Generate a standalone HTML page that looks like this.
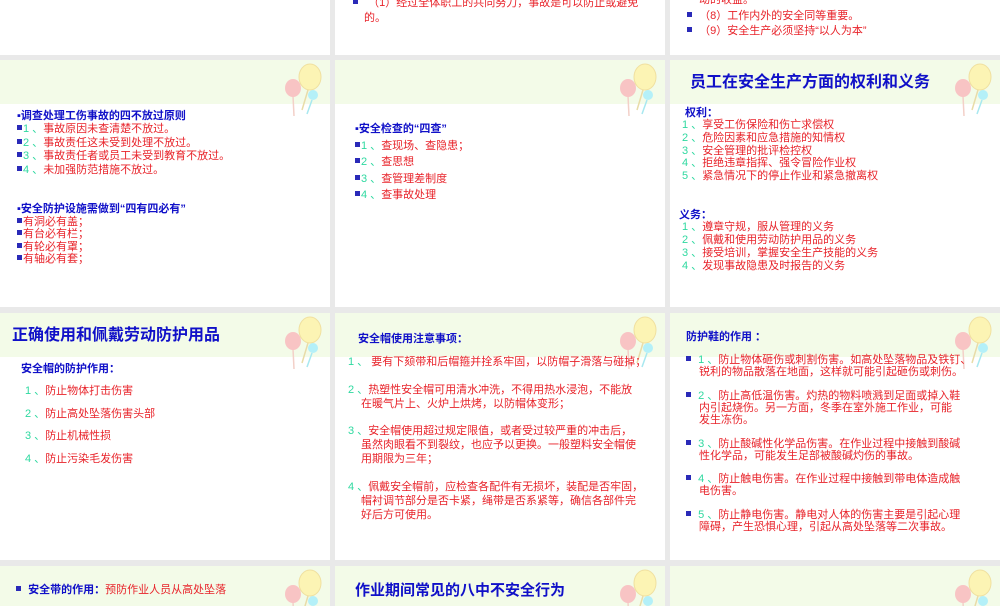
<!DOCTYPE html>
<html><head><meta charset="utf-8"><style>
*{margin:0;padding:0;box-sizing:border-box}
body{width:1000px;height:600px;background:#e9e9e9;position:relative;overflow:hidden;font-family:"Liberation Sans","Noto Sans CJK SC",sans-serif}
.s{position:absolute;background:#fff;overflow:hidden;width:330px}
.band{position:absolute;left:0;top:0;width:100%;height:44px;background:#f3fbe8}
.t{position:absolute;white-space:nowrap;font-size:11px;line-height:13px;color:#e8232a}
.b{color:#1010c8;font-weight:bold}
.g{color:#2fd9a0}
.sq{display:inline-block;width:5px;height:5px;background:#2a2ab8;vertical-align:2px;margin-right:1px}
.h{font-size:16px;font-weight:bold;color:#1010c8;line-height:20px}
.bal{position:absolute;left:280px;top:0}
</style></head><body>
<svg width="0" height="0" style="position:absolute"><defs><g id="bl">
<line x1="13" y1="36" x2="14" y2="56" stroke="#f3d0c8" stroke-width="1.5"/>
<line x1="28" y1="30" x2="22" y2="50" stroke="#e8dca8" stroke-width="1.5"/>
<line x1="32" y1="40" x2="27" y2="54" stroke="#a8e8f0" stroke-width="1.5"/>
<ellipse cx="13" cy="28" rx="8" ry="9" fill="#f8c4c4"/>
<ellipse cx="30" cy="17" rx="11" ry="13" fill="#fcf4b4" stroke="#f0e0a0"/>
<ellipse cx="33" cy="35" rx="5" ry="5" fill="#b4f0f8"/>
</g></defs></svg>

<div class="s" style="left:0;top:0;height:55px"></div>
<div class="s" style="left:335px;top:0;height:55px">
<div class="t" style="left:18px;top:-3px"><span class="sq"></span>&nbsp;&nbsp;&nbsp;（1）经过全体职工的共同努力，事故是可以防止或避免</div>
<div class="t" style="left:29px;top:12px">的。</div></div>
<div class="s" style="left:670px;top:0;height:55px">
<div class="t" style="left:29px;top:-6px">动的收益。</div>
<div class="t" style="left:17px;top:10px"><span class="sq"></span>&nbsp;&nbsp;（8）工作内外的安全同等重要。</div>
<div class="t" style="left:17px;top:25px"><span class="sq"></span>&nbsp;&nbsp;（9）安全生产必须坚持“以人为本”</div></div>

<div class="s" style="left:0;top:60px;height:247px"><div class="band"></div><svg class="bal" width="50" height="60"><use href="#bl"/></svg>
<div class="t" style="left:17px;top:50px"><span class="b">▪调查处理工伤事故的四不放过原则</span></div>
<div class="t" style="left:17px;top:63px"><span class="sq"></span><span class="g">1 、</span>事故原因未查清楚不放过。</div>
<div class="t" style="left:17px;top:77px"><span class="sq"></span><span class="g">2 、</span>事故责任这未受到处理不放过。</div>
<div class="t" style="left:17px;top:90px"><span class="sq"></span><span class="g">3 、</span>事故责任者或员工未受到教育不放过。</div>
<div class="t" style="left:17px;top:104px"><span class="sq"></span><span class="g">4 、</span>未加强防范措施不放过。</div>
<div class="t" style="left:17px;top:143px"><span class="b">▪安全防护设施需做到“四有四必有”</span></div>
<div class="t" style="left:17px;top:156px"><span class="sq"></span>有洞必有盖；</div>
<div class="t" style="left:17px;top:168px"><span class="sq"></span>有台必有栏；</div>
<div class="t" style="left:17px;top:181px"><span class="sq"></span>有轮必有罩；</div>
<div class="t" style="left:17px;top:193px"><span class="sq"></span>有轴必有套；</div>
</div>
<div class="s" style="left:335px;top:60px;height:247px"><div class="band"></div><svg class="bal" width="50" height="60"><use href="#bl"/></svg>
<div class="t" style="left:20px;top:63px"><span class="b">▪安全检查的“四查”</span></div>
<div class="t" style="left:20px;top:80px"><span class="sq"></span><span class="g">1 、</span>查现场、查隐患；</div>
<div class="t" style="left:20px;top:96px"><span class="sq"></span><span class="g">2 、</span>查思想</div>
<div class="t" style="left:20px;top:113px"><span class="sq"></span><span class="g">3 、</span>查管理差制度</div>
<div class="t" style="left:20px;top:129px"><span class="sq"></span><span class="g">4 、</span>查事故处理</div>
</div>
<div class="s" style="left:670px;top:60px;height:247px"><div class="band"></div><svg class="bal" width="50" height="60"><use href="#bl"/></svg>
<div class="t h" style="left:20px;top:13px">员工在安全生产方面的权利和义务</div>
<div class="t b" style="left:15px;top:47px">权利：</div>
<div class="t" style="left:12px;top:59px"><span class="g">1 、</span>享受工伤保险和伤亡求偿权</div>
<div class="t" style="left:12px;top:72px"><span class="g">2 、</span>危险因素和应急措施的知情权</div>
<div class="t" style="left:12px;top:85px"><span class="g">3 、</span>安全管理的批评检控权</div>
<div class="t" style="left:12px;top:97px"><span class="g">4 、</span>拒绝违章指挥、强令冒险作业权</div>
<div class="t" style="left:12px;top:110px"><span class="g">5 、</span>紧急情况下的停止作业和紧急撤离权</div>
<div class="t b" style="left:9px;top:149px">义务：</div>
<div class="t" style="left:12px;top:161px"><span class="g">1 、</span>遵章守规，服从管理的义务</div>
<div class="t" style="left:12px;top:174px"><span class="g">2 、</span>佩戴和使用劳动防护用品的义务</div>
<div class="t" style="left:12px;top:187px"><span class="g">3 、</span>接受培训，掌握安全生产技能的义务</div>
<div class="t" style="left:12px;top:200px"><span class="g">4 、</span>发现事故隐患及时报告的义务</div>
</div>

<div class="s" style="left:0;top:313px;height:247px"><div class="band"></div><svg class="bal" width="50" height="60"><use href="#bl"/></svg>
<div class="t h" style="left:12px;top:13px">正确使用和佩戴劳动防护用品</div>
<div class="t b" style="left:21px;top:50px">安全帽的防护作用：</div>
<div class="t" style="left:25px;top:72px"><span class="g">1 、</span>防止物体打击伤害</div>
<div class="t" style="left:25px;top:95px"><span class="g">2 、</span>防止高处坠落伤害头部</div>
<div class="t" style="left:25px;top:117px"><span class="g">3 、</span>防止机械性损</div>
<div class="t" style="left:25px;top:140px"><span class="g">4 、</span>防止污染毛发伤害</div>
</div>
<div class="s" style="left:335px;top:313px;height:247px"><div class="band"></div><svg class="bal" width="50" height="60"><use href="#bl"/></svg>
<div class="t b" style="left:23px;top:20px">安全帽使用注意事项：</div>
<div class="t" style="left:13px;top:43px"><span class="g">1 、</span>&nbsp;要有下颏带和后帽箍并拴系牢固，以防帽子滑落与碰掉；</div>
<div class="t" style="left:13px;top:71px"><span class="g">2 、</span>热塑性安全帽可用清水冲洗，不得用热水浸泡，不能放</div>
<div class="t" style="left:26px;top:85px">在暖气片上、火炉上烘烤，以防帽体变形；</div>
<div class="t" style="left:13px;top:112px"><span class="g">3 、</span>安全帽使用超过规定限值，或者受过较严重的冲击后，</div>
<div class="t" style="left:26px;top:126px">虽然肉眼看不到裂纹，也应予以更换。一般塑料安全帽使</div>
<div class="t" style="left:26px;top:140px">用期限为三年；</div>
<div class="t" style="left:13px;top:168px"><span class="g">4 、</span>佩戴安全帽前，应检查各配件有无损坏，装配是否牢固，</div>
<div class="t" style="left:26px;top:182px">帽衬调节部分是否卡紧，绳带是否系紧等，确信各部件完</div>
<div class="t" style="left:26px;top:196px">好后方可使用。</div>
</div>
<div class="s" style="left:670px;top:313px;height:247px"><div class="band"></div><svg class="bal" width="50" height="60"><use href="#bl"/></svg>
<div class="t b" style="left:16px;top:18px">防护鞋的作用 ：</div>
<div class="t" style="left:16px;top:41px"><span class="sq"></span>&nbsp;&nbsp;<span class="g">1 、</span>防止物体砸伤或刺割伤害。如高处坠落物品及铁钉、</div>
<div class="t" style="left:29px;top:53px">锐利的物品散落在地面，这样就可能引起砸伤或刺伤。</div>
<div class="t" style="left:16px;top:77px"><span class="sq"></span>&nbsp;&nbsp;<span class="g">2 、</span>防止高低温伤害。灼热的物料喷溅到足面或掉入鞋</div>
<div class="t" style="left:29px;top:89px">内引起烧伤。另一方面，冬季在室外施工作业，可能</div>
<div class="t" style="left:29px;top:101px">发生冻伤。</div>
<div class="t" style="left:16px;top:125px"><span class="sq"></span>&nbsp;&nbsp;<span class="g">3 、</span>防止酸碱性化学品伤害。在作业过程中接触到酸碱</div>
<div class="t" style="left:29px;top:137px">性化学品，可能发生足部被酸碱灼伤的事故。</div>
<div class="t" style="left:16px;top:160px"><span class="sq"></span>&nbsp;&nbsp;<span class="g">4 、</span>防止触电伤害。在作业过程中接触到带电体造成触</div>
<div class="t" style="left:29px;top:172px">电伤害。</div>
<div class="t" style="left:16px;top:196px"><span class="sq"></span>&nbsp;&nbsp;<span class="g">5 、</span>防止静电伤害。静电对人体的伤害主要是引起心理</div>
<div class="t" style="left:29px;top:208px">障碍，产生恐惧心理，引起从高处坠落等二次事故。</div>
</div>

<div class="s" style="left:0;top:566px;height:40px"><div class="band"></div><svg class="bal" width="50" height="60"><use href="#bl"/></svg>
<div class="t" style="left:16px;top:18px"><span class="sq"></span>&nbsp;&nbsp;<span class="b">安全带的作用：</span>预防作业人员从高处坠落</div></div>
<div class="s" style="left:335px;top:566px;height:40px"><div class="band"></div><svg class="bal" width="50" height="60"><use href="#bl"/></svg>
<div class="t h" style="left:20px;top:15px;font-size:15px">作业期间常见的八中不安全行为</div></div>
<div class="s" style="left:670px;top:566px;height:40px"><div class="band"></div><svg class="bal" width="50" height="60"><use href="#bl"/></svg></div>
</body></html>
